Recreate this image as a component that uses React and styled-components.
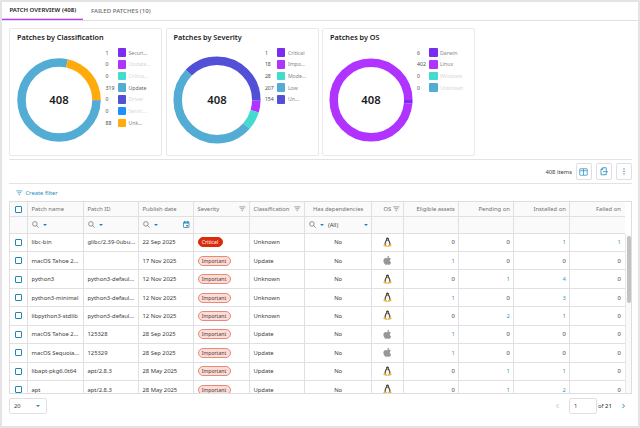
import React from 'react';
import styled, { createGlobalStyle } from 'styled-components';
import { FaApple } from 'react-icons/fa';

const GlobalStyle = createGlobalStyle`
  * { box-sizing: border-box; }
  body {
    margin: 0;
    background: #e4e4e5;
    font-family: 'Noto Sans', 'Open Sans', sans-serif;
    font-size: 5.85px;
    color: #3a3a3d;
    overflow: hidden;
  }
`;

const Page = styled.div`
  height: 428px;
  padding: 2px;
`;

const Panel = styled.main`
  height: 424px;
  background: #fff;
  display: flex;
  flex-direction: column;
  overflow: hidden;
`;

const Tabs = styled.nav`
  display: flex;
  flex: none;
  height: 19px;
  border-bottom: 1px solid #dfdfe1;
`;

const Tab = styled.div`
  height: 18px;
  padding: 0 7.4px;
  line-height: 17.5px;
  font-size: ${props => (props.$active ? 6 : 6.1)}px;
  white-space: nowrap;
  font-weight: ${props => (props.$active ? 600 : 500)};
  color: ${props => (props.$active ? '#1b1b1d' : '#6c6c70')};
  background: ${props => (props.$active ? 'linear-gradient(#e6c2ff 50%, #b43cff 50%) bottom / 100% 2px no-repeat' : 'none')};
`;

const Content = styled.div`
  padding: 7px 6px 0 7px;
`;

const Cards = styled.div`
  display: flex;
  gap: 3.5px;
  height: 128px;
`;

const Card = styled.section`
  width: 153px;
  height: 128px;
  padding: 3.5px 0 0 7px;
  border: 1px solid #e9e9ea;
  border-radius: 2px;
`;

const CardTitle = styled.h2`
  margin: 0;
  height: 9px;
  line-height: 9px;
  font-size: 7.25px;
  font-weight: 600;
  color: #1b1b1d;
  white-space: nowrap;
`;

const CardBody = styled.div`
  display: flex;
`;

const Donut = styled.svg`
  display: block;
  flex: none;
  width: 88px;
  height: 88px;
  margin: 14.5px 0 0 ${props => props.$offset || -2}px;
`;

const DonutTotal = styled.text`
  font-size: 11.3px;
  font-weight: 600;
  fill: #1b1b1d;
  text-anchor: middle;
`;

const Legend = styled.ul`
  list-style: none;
  margin: 5.3px 0 0 ${props => props.$gap}px;
  padding: 0;
`;

const LegendItem = styled.li`
  display: grid;
  grid-template-columns: 12px 11px auto;
  align-items: center;
  height: 11.7px;
  font-size: 5.2px;
  white-space: nowrap;
  color: #4c4c50;
`;

const Swatch = styled.span`
  width: 8.5px;
  height: 8.5px;
  border-radius: 1px;
  background: ${props => props.$color};
`;

const LegendLabel = styled.span`
  color: ${props => (props.$muted ? '#d6d6d8' : props.$dark ? '#66666a' : '#85858a')};
`;

const Toolbar = styled.div`
  display: flex;
  align-items: center;
  justify-content: flex-end;
  gap: 3.5px;
  height: 25px;
  margin-top: 3px;
  border-top: 1px solid #e3e3e5;
  border-bottom: 1px solid #e3e3e5;
`;

const ItemCount = styled.span`
  font-size: 5.8px;
`;

const ToolButton = styled.button`
  display: flex;
  align-items: center;
  justify-content: center;
  width: 16.5px;
  height: 16.5px;
  padding: 0;
  border: 1px solid #e0e0e2;
  border-radius: 2px;
  background: #fff;
  color: #2b8fbd;
`;

const FilterLink = styled.div`
  display: flex;
  align-items: center;
  gap: 2.8px;
  height: 17px;
  padding: 0 0 0 7px;
  color: #2b8fbd;
  font-size: 5.85px;
`;

const Grid = styled.div`
  width: 623px;
  height: 193px;
  border: 1px solid #dedee0;
  overflow: hidden;
`;

const COLUMNS = '18px 56px 55px 55px 56px 55px 67px 32px 55px 55px 56px 55px';

const GridRow = styled.div`
  display: grid;
  grid-template-columns: ${COLUMNS};
  width: 615px;
  height: ${props => props.$height}px;
  background: ${props => (props.$head ? '#fafafa' : '#fff')};
  color: ${props => (props.$title ? '#717175' : 'inherit')};
  border-bottom: 1px solid #e0e0e2;
`;

const Cell = styled.div`
  display: flex;
  align-items: center;
  min-width: 0;
  padding: 0 3.2px 0 3.5px;
  justify-content: ${props => props.$align || 'flex-start'};
  gap: ${props => props.$gap || 0}px;
  border-right: 1px solid ${props => (props.$last ? 'transparent' : '#e0e0e2')};
  color: ${props => (props.$link ? '#3a96c4' : 'inherit')};
  white-space: nowrap;
  overflow: hidden;
`;

const Spacer = styled.span`
  flex: 1;
`;

const GridBody = styled.div`
  display: flex;
  height: 160px;
  overflow: hidden;
`;

const Scrollbar = styled.div`
  flex: none;
  width: 6px;
  height: 160px;
  padding: 2px 1px;
  background: #fafafa;
  border-left: 1px solid #e8e8ea;
`;

const Thumb = styled.div`
  width: 4px;
  height: 67px;
  border-radius: 2px;
  background: #c2c2c2;
`;

const Checkbox = styled.span`
  width: 7px;
  height: 7px;
  border: 1px solid #1f86b6;
  border-radius: 1px;
  background: #fff;
`;

const Badge = styled.span`
  height: 10px;
  padding: 0 3.3px;
  border-radius: 5px;
  font-size: 5.1px;
  line-height: 8px;
  border: 1px solid ${props => (props.$critical ? '#da2c0c' : '#ec8877')};
  background: ${props => (props.$critical ? '#da2c0c' : '#fbdcd6')};
  color: ${props => (props.$critical ? '#fff' : '#4f3b38')};
`;

const Caret = styled.span`
  border: 2px solid transparent;
  border-top-color: #1f88b8;
  border-bottom-width: 0;
`;

const OsIcon = styled.span`
  display: flex;
  margin-bottom: 1px;
  color: #979797;
`;

const Footer = styled.footer`
  display: flex;
  align-items: center;
  height: 16px;
  margin-top: 4px;
`;

const PageSize = styled.div`
  display: flex;
  align-items: center;
  justify-content: space-between;
  width: 37.5px;
  height: 16px;
  padding: 0 6px 0 4px;
  border: 1px solid #e0e0e2;
  border-radius: 2px;
`;

const PageInput = styled.div`
  width: 27.5px;
  height: 16px;
  margin: 0 1.5px 0 9px;
  padding-left: 4px;
  line-height: 14px;
  border: 1px solid #e0e0e2;
  border-radius: 2px;
`;

const PageCount = styled.span`
  width: 23px;
  white-space: nowrap;
  b { font-weight: 500; }
`;

const Chevron = styled.svg`
  width: 5px;
  height: 6px;
  margin-right: ${props => props.$end || 0}px;
  fill: none;
  stroke: ${props => (props.$disabled ? '#c4c4c7' : '#2b8fbd')};
`;

const Icon = styled.svg`
  display: block;
  flex: none;
  fill: none;
  color: ${props => props.$color || 'inherit'};
  stroke: ${props => (props.$solid ? 'none' : 'currentColor')};
`;

const PURPLE = '#7a2cf0';
const MAGENTA = '#b033ff';
const TEAL = '#43dbd0';
const BLUE = '#52acd3';
const INDIGO = '#5150d6';

const charts = [
  {
    title: 'Patches by Classification', radius: 37.5, gap: 2.5,
    items: [
      ['Securi...', 1, PURPLE], ['Update...', 0, MAGENTA], ['Critica...', 0, TEAL],
      ['Update', 319, BLUE], ['Driver', 0, INDIGO], ['Servic...', 0, '#1f8fff'], ['Unk...', 88, '#ffab0b'],
    ],
  },
  {
    title: 'Patches by Severity', radius: 39.3, gap: 3.9, offset: -0.5,
    items: [['Critical', 1, PURPLE], ['Impo...', 18, MAGENTA], ['Mode...', 28, TEAL], ['Low', 207, BLUE], ['Un...', 154, INDIGO]],
  },
  {
    title: 'Patches by OS', radius: 37.3, gap: 2, offset: -3,
    items: [['Darwin', 6, PURPLE], ['Linux', 402, MAGENTA], ['Windows', 0, TEAL], ['Unknown', 0, BLUE]],
  },
];

const rows = [
  ['libc-bin', 'glibc/2.39-0ubu...', '22 Sep 2025', 'Critical', 'Unknown', 'linux', 0, 0, 1, 1],
  ['macOS Tahoe 2...', '', '17 Nov 2025', 'Important', 'Update', 'mac', 1, 0, 0, 0],
  ['python3', 'python3-defaul...', '12 Nov 2025', 'Important', 'Unknown', 'linux', 0, 1, 4, 0],
  ['python3-minimal', 'python3-defaul...', '12 Nov 2025', 'Important', 'Unknown', 'linux', 1, 0, 3, 0],
  ['libpython3-stdlib', 'python3-defaul...', '12 Nov 2025', 'Important', 'Unknown', 'linux', 0, 2, 1, 0],
  ['macOS Tahoe 2...', '125328', '28 Sep 2025', 'Important', 'Update', 'mac', 1, 0, 0, 0],
  ['macOS Sequoia...', '125329', '28 Sep 2025', 'Important', 'Update', 'mac', 1, 0, 0, 0],
  ['libapt-pkg6.0t64', 'apt/2.8.3', '28 May 2025', 'Important', 'Update', 'linux', 0, 1, 1, 0],
  ['apt', 'apt/2.8.3', '28 May 2025', 'Important', 'Update', 'linux', 0, 1, 2, 0],
];

const SearchIcon = () => (
  <Icon width="7" height="7" viewBox="0 0 14 14" $color="#68686c" strokeWidth="1.4">
    <circle cx="5.8" cy="5.8" r="4.6" />
    <path d="M9 9l4.3 4.3" />
  </Icon>
);

const FunnelIcon = ({ color = '#77777b' }) => (
  <Icon width="6.6" height="6" viewBox="0 0 14 12" $color={color} strokeWidth="1.5">
    <path d="M.5 1.5h13M3 5.5h8M5.5 9.5h3" />
  </Icon>
);

const CalendarIcon = () => (
  <Icon width="6.5" height="7" viewBox="0 0 13 14" $color="#2187b8" strokeWidth="1.5">
    <rect x="1" y="2" width="11" height="11" rx="1" />
    <path d="M1 4h11M3.5 0v3M9.5 0v3" strokeWidth="2.4" />
    <rect x="6.5" y="8" width="3.5" height="3" fill="#2187b8" stroke="none" />
  </Icon>
);

const TableIcon = () => (
  <Icon width="9" height="8" viewBox="0 0 18 16" strokeWidth="1.5">
    <rect x="1.5" y="1.5" width="15" height="13" rx="1" />
    <path d="M1.5 5.5h15M9 2v12" />
  </Icon>
);

const ExportIcon = () => (
  <Icon width="8" height="9" viewBox="0 0 16 18" strokeWidth="1.7">
    <path d="M12.5 6V1.5H5.5L2 5v10.500h10.500V12.500M2 5h3.500V1.500" />
    <path d="M6 9.300h8.500M12 6.300l3 3-3 3" />
  </Icon>
);

const MoreIcon = () => (
  <Icon width="2" height="7" viewBox="0 0 2 7" $solid>
    <g fill="#2b8fbd">
      <circle cx="1" cy="1" r=".7" />
      <circle cx="1" cy="3.500" r=".7" />
      <circle cx="1" cy="6" r=".7" />
    </g>
  </Icon>
);

const LinuxIcon = () => (
  <Icon width="9" height="10" viewBox="0 0 18 20" $solid>
    <path d="M9 .8C6.800.8 6 2.300 6 4.600c0 2.600-3 5.400-3 9.200C3 17 5 18.500 9 18.500s6-1.500 6-4.700c0-3.800-3-6.600-3-9.200C12 2.300 11.200.8 9 .8z" fill="#3c4248" />
    <path d="M9 7c-2 0-3.600 4-3.600 7 0 2 1.500 4.600 3.600 4.600s3.600-2.600 3.600-4.600c0-3-1.600-7-3.600-7z" fill="#f7f7f7" />
    <path d="M7 5.200l2-1 2 1-2 1.800z" fill="#f4b319" />
    <path d="M3.500 13.500l3.500 4c.5 1.500-.8 2.300-2.300 1.700L1 18.200c-.7-.5.200-1.500.2-2.700zM14.500 13.500l-3.500 4c-.5 1.500.8 2.300 2.300 1.700l3.700-1c.7-.5-.2-1.500-.2-2.700z" fill="#fbb51c" />
  </Icon>
);

const DonutChart = ({ items, radius, offset }) => {
  let start = 0;
  return (
    <Donut viewBox="0 0 88 88" $offset={offset}>
      {items.map(([label, value, color]) => {
        const from = start;
        start += value;
        if (!value) return null;
        return (
          <circle
            key={label + color}
            cx="44" cy="44" r={radius}
            fill="none" stroke={color} strokeWidth="8.5"
            pathLength="408"
            strokeDasharray={`${value} ${408 - value}`}
            strokeDashoffset={-from}
          />
        );
      })}
      <DonutTotal x="44" y="48.2">408</DonutTotal>
    </Donut>
  );
};

const ChartCard = ({ title, items, radius, gap, offset }) => (
  <Card>
    <CardTitle>{title}</CardTitle>
    <CardBody>
      <DonutChart items={items} radius={radius} offset={offset} />
      <Legend $gap={gap}>
        {items.map(([label, value, color]) => (
          <LegendItem key={label + color}>
            <span>{value}</span>
            <Swatch $color={color} />
            <LegendLabel $muted={!value} $dark={value === 319}>{label}</LegendLabel>
          </LegendItem>
        ))}
      </Legend>
    </CardBody>
  </Card>
);

const SearchCell = ({ children }) => (
  <Cell $gap={4.2}>
    <SearchIcon />
    <Caret />
    {children}
  </Cell>
);

const PatchRow = ({ row }) => {
  const [name, id, date, severity, kind, os, ...counts] = row;
  return (
    <GridRow $height={18.45}>
      <Cell $align="center"><Checkbox /></Cell>
      <Cell>{name}</Cell>
      <Cell>{id}</Cell>
      <Cell>{date}</Cell>
      <Cell><Badge $critical={severity === 'Critical'}>{severity}</Badge></Cell>
      <Cell>{kind}</Cell>
      <Cell $align="center">No</Cell>
      <Cell $align="center">
        <OsIcon>{os === 'linux' ? <LinuxIcon /> : <FaApple size={10.5} />}</OsIcon>
      </Cell>
      {counts.map((n, i) => (
        <Cell key={i} $align="flex-end" $link={n > 0} $last={i === 3}>{n}</Cell>
      ))}
    </GridRow>
  );
};

export default function App() {
  return (
    <Page>
      <GlobalStyle />
      <Panel>
        <Tabs>
          <Tab $active>PATCH OVERVIEW (408)</Tab>
          <Tab>FAILED PATCHES (10)</Tab>
        </Tabs>
        <Content>
          <Cards>
            {charts.map(chart => <ChartCard key={chart.title} {...chart} />)}
          </Cards>
          <Toolbar>
            <ItemCount>408 items</ItemCount>
            <ToolButton><TableIcon /></ToolButton>
            <ToolButton><ExportIcon /></ToolButton>
            <ToolButton><MoreIcon /></ToolButton>
          </Toolbar>
          <FilterLink><FunnelIcon color="#2b8fbd" />Create filter</FilterLink>
          <Grid>
            <GridRow $head $title $height={15}>
              <Cell $align="center"><Checkbox /></Cell>
              <Cell>Patch name</Cell>
              <Cell>Patch ID</Cell>
              <Cell>Publish date</Cell>
              <Cell>Severity<Spacer /><FunnelIcon /></Cell>
              <Cell>Classification<Spacer /><FunnelIcon /></Cell>
              <Cell $align="center">Has dependencies</Cell>
              <Cell $align="flex-end" $gap={2}>OS<FunnelIcon /></Cell>
              <Cell $align="flex-end">Eligible assets</Cell>
              <Cell $align="flex-end">Pending on</Cell>
              <Cell $align="flex-end">Installed on</Cell>
              <Cell $align="flex-end" $last>Failed on</Cell>
            </GridRow>
            <GridRow $head $height={16.5}>
              <Cell />
              <SearchCell />
              <SearchCell />
              <SearchCell><Spacer /><CalendarIcon /></SearchCell>
              <Cell />
              <Cell />
              <SearchCell>(All)<Spacer /><Caret /></SearchCell>
              <Cell />
              <Cell />
              <Cell />
              <Cell />
              <Cell $last />
            </GridRow>
            <GridBody>
              <div>
                {rows.map((row, i) => <PatchRow key={i} row={row} />)}
              </div>
              <Scrollbar><Thumb /></Scrollbar>
            </GridBody>
          </Grid>
          <Footer>
            <PageSize>20<Caret /></PageSize>
            <Spacer />
            <Chevron viewBox="0 0 5 6" $disabled><path d="M3.500 1L1.500 3l2 2" /></Chevron>
            <PageInput>1</PageInput>
            <PageCount>of <b>21</b></PageCount>
            <Chevron viewBox="0 0 5 6" $end={6}><path d="M1.500 1l2 2-2 2" /></Chevron>
          </Footer>
        </Content>
      </Panel>
    </Page>
  );
}
